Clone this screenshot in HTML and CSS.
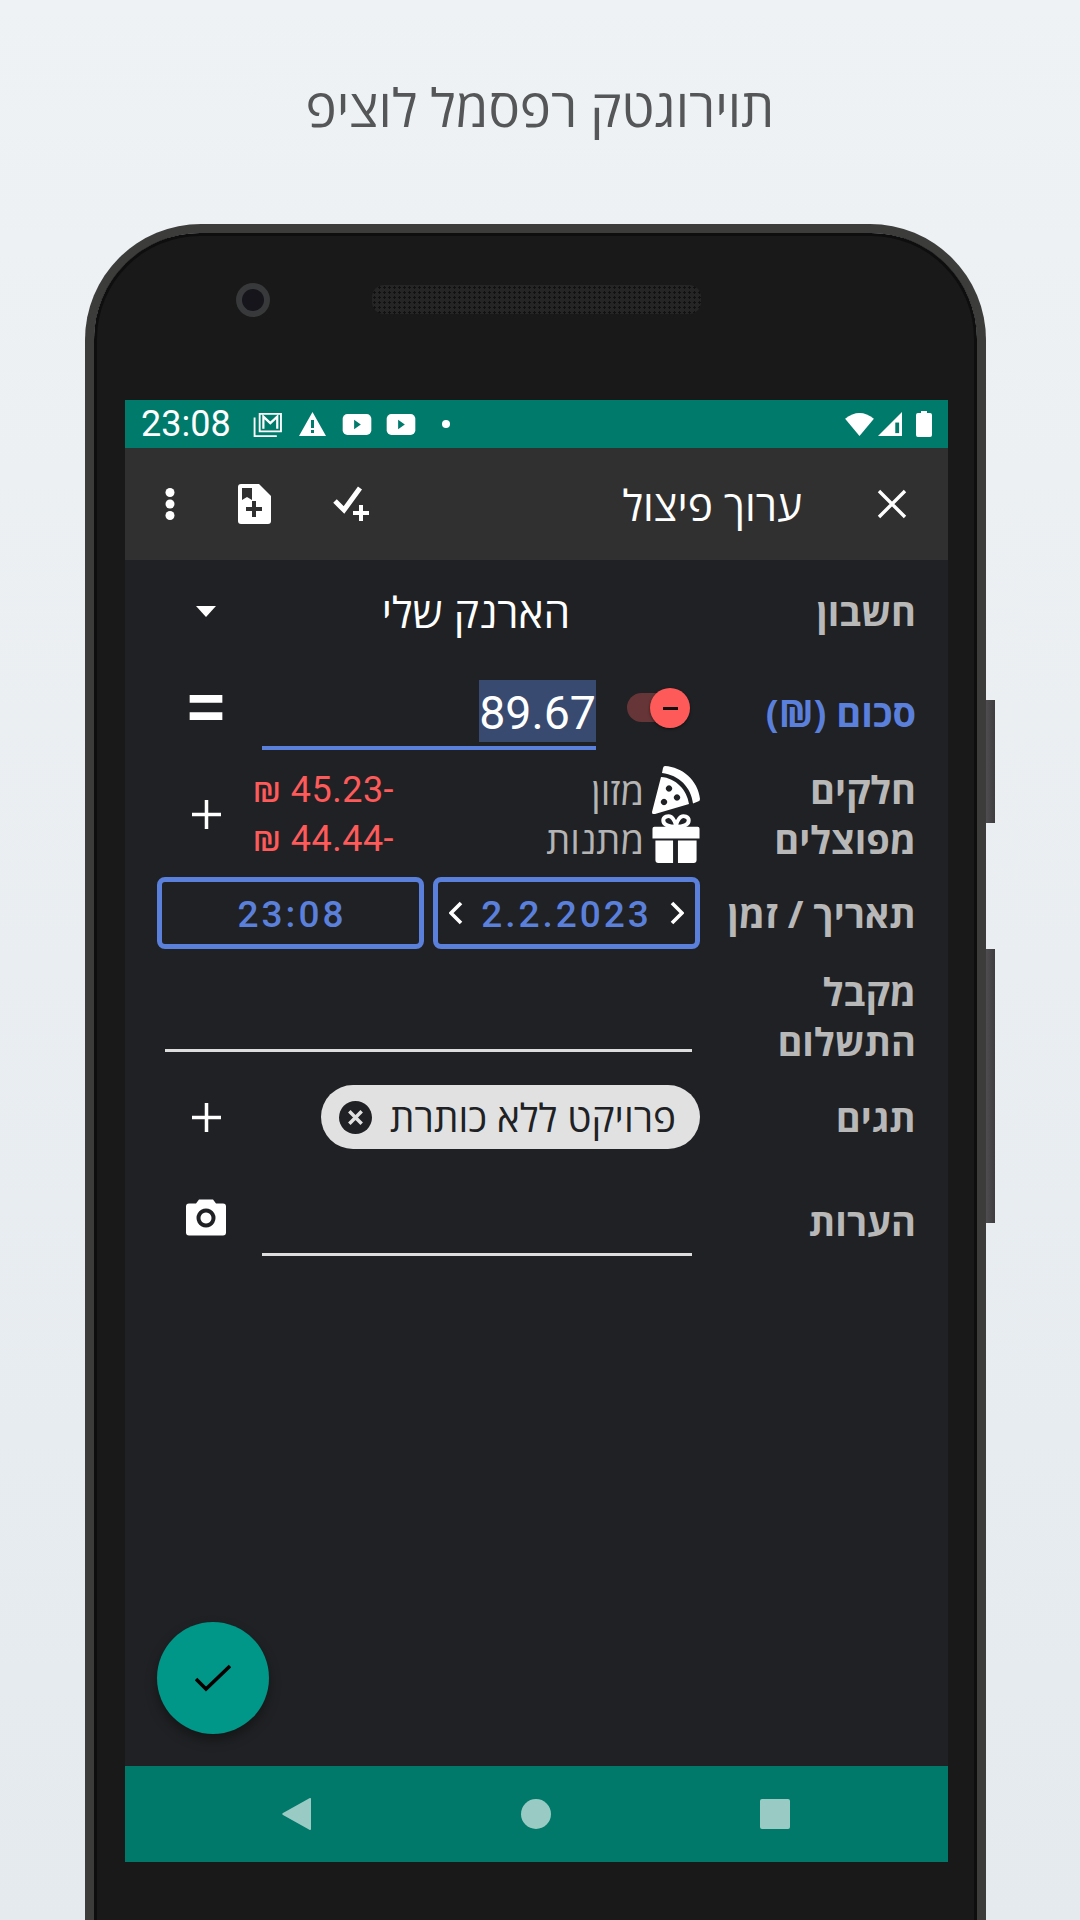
FILE: index.html
```html
<!DOCTYPE html>
<html lang="he">
<head>
    <meta charset="utf-8">
    <title>Split screen</title>
    <link rel="stylesheet" href="styles.css">
</head>
<body>
    <h1 class="headline">פיצול למספר קטגוריות</h1>

    <div class="phone">
        <div class="side-key side-key-top"></div>
        <div class="side-key side-key-bottom"></div>
        <div class="phone-face">
            <div class="earpiece-row">
                <div class="camera"><div class="lens"></div></div>
                <div class="speaker"></div>
            </div>

            <div class="screen">
                <!-- status bar -->
                <div class="status-bar">
                    <span class="clock">23:08</span>
                    <svg class="st-mail" width="30" height="25" viewBox="0 0 32 27">
                        <path d="M7 2h23v19H7z" fill="none" stroke="#fff" stroke-width="2"/>
                        <path d="M1.500 6v20h24" fill="none" stroke="#fff" stroke-width="2"/>
                        <path d="M11 18V5l7.500 7L26 5v13" fill="none" stroke="#fff" stroke-width="2.400"/>
                    </svg>
                    <svg class="st-warn" width="27" height="24" viewBox="0 0 27 24">
                        <path d="M13.500 0L27 24H0z" fill="#fff"/>
                        <path d="M12 8h3v8h-3zM12 18h3v3h-3z" fill="#007a6b"/>
                    </svg>
                    <svg class="st-video" width="30" height="21" viewBox="0 0 30 22">
                        <rect width="30" height="22" rx="5" fill="#fff"/>
                        <path d="M12 6l7 5-7 5z" fill="#007a6b"/>
                    </svg>
                    <svg class="st-video-last" width="30" height="21" viewBox="0 0 30 22">
                        <rect width="30" height="22" rx="5" fill="#fff"/>
                        <path d="M12 6l7 5-7 5z" fill="#007a6b"/>
                    </svg>
                    <span class="st-dot"></span>
                    <span class="status-spacer"></span>
                    <svg width="29" height="24" viewBox="0 0 30 25">
                        <path d="M15 25L0 7Q15 -5 30 7z" fill="#fff"/>
                    </svg>
                    <svg class="st-signal" width="26" height="24" viewBox="0 0 25 25">
                        <path d="M25 0v25H0z" fill="#fff"/>
                        <path d="M18 11h4v11h-4z" fill="#007a6b"/>
                    </svg>
                    <svg width="16" height="26" viewBox="0 0 16 26">
                        <path d="M5 0h6v2h3q2 0 2 2v20q0 2-2 2H2q-2 0-2-2V4q0-2 2-2h3z" fill="#fff"/>
                    </svg>
                </div>

                <!-- toolbar -->
                <div class="toolbar">
                    <svg class="close-icon" width="30" height="30" viewBox="0 0 30 30">
                        <path d="M2 2l26 26M28 2L2 28" stroke="#fff" stroke-width="3.400"/>
                    </svg>
                    <span class="toolbar-title">ערוך פיצול</span>
                    <span class="toolbar-spacer"></span>
                    <svg class="tb-check" width="38" height="36" viewBox="0 0 38 36">
                        <path d="M2 15l9 9L27 2" fill="none" stroke="#fff" stroke-width="5"/>
                        <path d="M28 19v16M20 27h16" stroke="#fff" stroke-width="4"/>
                    </svg>
                    <svg class="tb-doc" width="33" height="40" viewBox="0 0 33 40">
                        <path d="M3 0h18l12 12v25q0 3-3 3H3q-3 0-3-3V3q0-3 3-3z" fill="#fff"/>
                        <path d="M4 4h10v12l-5-3-5 3z" fill="#303030"/>
                        <path d="M16 17v16M8 25h16" stroke="#303030" stroke-width="4"/>
                    </svg>
                    <svg width="10" height="32" viewBox="0 0 10 32">
                        <circle cx="5" cy="4.500" r="4.500" fill="#fff"/>
                        <circle cx="5" cy="16" r="4.500" fill="#fff"/>
                        <circle cx="5" cy="27.500" r="4.500" fill="#fff"/>
                    </svg>
                </div>

                <!-- form -->
                <div class="form">
                    <div class="row row-account">
                        <div class="label">חשבון</div>
                        <div class="account-name">הארנק שלי</div>
                        <div class="side-action"><span class="caret"></span></div>
                    </div>

                    <div class="row row-amount">
                        <div class="label label-blue">סכום (₪)</div>
                        <div class="sign-switch">
                            <span class="switch-track"></span>
                            <span class="switch-thumb"><span class="switch-minus"></span></span>
                        </div>
                        <div class="amount-field"><span class="amount-value">89.67</span></div>
                        <div class="side-action side-action-equals">
                            <svg width="34" height="25" viewBox="0 0 34 26"><path d="M0 0h34v8H0zM0 18h34v8H0z" fill="#fff"/></svg>
                        </div>
                    </div>

                    <div class="row row-parts">
                        <div class="label">חלקים מפוצלים</div>
                        <div class="parts">
                            <div class="part">
                                <svg class="part-icon" width="48" height="48" viewBox="0 0 48 48">
                                    <path d="M13 0C30 1 46 14 48 33q0 2-2 2.500l-5 2C39 21 27 9 10 7l1-5q.5-2 2-2z" fill="#fff"/>
                                    <path fill-rule="evenodd" d="M9 11C24 12 35 24 37 38L3 48q-3 1-3-2z M17 19.300a3.200 3.200 0 1 0 .01 0z M25 28.300a3.200 3.200 0 1 0 .01 0z M12 32.800a3.200 3.200 0 1 0 .01 0z" fill="#fff"/>
                                </svg>
                                <span class="part-name">מזון</span>
                                <span class="part-sum">-45.23 ₪</span>
                            </div>
                            <div class="part">
                                <svg class="part-icon" width="48" height="49" viewBox="0 0 48 50">
                                    <path d="M2 13h44q2 0 2 2v10H0V15q0-2 2-2zM3 27h18v23H6q-3 0-3-3zM26 27h19v20q0 3-3 3H26z" fill="#fff"/>
                                    <path d="M24 13C14 13 11 10 11 6.500S16 1 19 3s5 7 5 10zm0 0c10 0 13-3 13-6.500S32 1 29 3s-5 7-5 10z" fill="none" stroke="#fff" stroke-width="4"/>
                                </svg>
                                <span class="part-name">מתנות</span>
                                <span class="part-sum">-44.44 ₪</span>
                            </div>
                        </div>
                        <div class="side-action">
                            <svg width="29" height="29" viewBox="0 0 28 28"><path d="M14 0v28M0 14h28" stroke="#fff" stroke-width="3.400"/></svg>
                        </div>
                    </div>

                    <div class="row row-date">
                        <div class="label">תאריך / זמן</div>
                        <div class="date-box date-box-date">
                            <svg width="15" height="24" viewBox="0 0 15 24"><path d="M12 2L2 12l10 10" fill="none" stroke="#fff" stroke-width="3.600"/></svg>
                            <span class="date-text">2.2.2023</span>
                            <svg width="15" height="24" viewBox="0 0 15 24"><path d="M3 2l10 10L3 22" fill="none" stroke="#fff" stroke-width="3.600"/></svg>
                        </div>
                        <div class="date-box date-box-time">
                            <span class="date-text">23:08</span>
                        </div>
                    </div>

                    <div class="row row-payee">
                        <div class="label">מקבל התשלום</div>
                        <div class="payee-field"></div>
                    </div>

                    <div class="row row-tags">
                        <div class="label">תגים</div>
                        <div class="tags">
                            <div class="chip">
                                <span class="chip-text">פרויקט ללא כותרת</span>
                                <svg width="33" height="33" viewBox="0 0 32 32">
                                    <circle cx="16" cy="16" r="16" fill="#202124"/>
                                    <path d="M10 10l12 12M22 10L10 22" stroke="#e1e1e1" stroke-width="3.400"/>
                                </svg>
                            </div>
                        </div>
                        <div class="side-action">
                            <svg width="29" height="29" viewBox="0 0 28 28"><path d="M14 0v28M0 14h28" stroke="#fff" stroke-width="3.400"/></svg>
                        </div>
                    </div>

                    <div class="row row-notes">
                        <div class="label">הערות</div>
                        <div class="notes-field"></div>
                        <div class="side-action side-action-camera">
                            <svg width="40" height="37" viewBox="0 0 40 36">
                                <path fill-rule="evenodd" d="M13 0h14l3 4h7q3 0 3 3v26q0 3-3 3H3q-3 0-3-3V7q0-3 3-3h7z M20 9a9.500 9.500 0 1 0 .01 0z M20 13a5.500 5.500 0 1 1-.01 0z" fill="#fff"/>
                            </svg>
                        </div>
                    </div>
                </div>

                <div class="fab">
                    <svg width="36" height="28" viewBox="0 0 36 28"><path d="M1 15l10 10L35 2" fill="none" stroke="#000" stroke-width="3.600"/></svg>
                </div>

                <!-- nav bar -->
                <div class="nav-bar">
                    <svg width="30" height="34" viewBox="0 0 30 34"><path d="M29 2v30a1 1 0 0 1-1.600.8L1 18a1.200 1.200 0 0 1 0-2L27.400 1.200A1 1 0 0 1 29 2z" fill="#99cbc4"/></svg>
                    <span class="nav-home"></span>
                    <span class="nav-recents"></span>
                </div>
            </div>
        </div>
    </div>
</body>
</html>
```

FILE: styles.css
```css
* {
    box-sizing: border-box;
}

html, body {
    height: 1920px;
    overflow: hidden;
}

body {
    margin: 0;
    background: linear-gradient(#eef2f5, #e5eaee);
    font-family: Roboto, "Open Sans", sans-serif;
}

.headline {
    margin: 0;
    height: 224px;
    padding-top: 76px;
    text-align: center;
    font-size: 52.5px;
    line-height: 66px;
    font-weight: 400;
    color: #555658;
    direction: ltr;
    unicode-bidi: bidi-override;
}

.phone {
    position: relative;
    width: 901px;
    height: 1696px;
    margin-left: 85px;
    border: 9px solid #3c3c3a;
    border-bottom: 0;
    border-radius: 116px 116px 0 0;
}

.side-key {
    position: absolute;
    right: -18px;
    width: 9px;
    background: linear-gradient(90deg, #4f4d50, #3e3c3e);
}

.side-key-top {
    top: 467px;
    height: 123px;
}

.side-key-bottom {
    top: 716px;
    height: 274px;
}

.phone-face {
    height: 100%;
    padding: 0 26px 0 28px;
    background: #191919;
    border: 3px solid #0e0e0e;
    border-bottom: 0;
    border-radius: 106px 106px 0 0;
}

.earpiece-row {
    height: 164px;
    display: flex;
    align-items: flex-start;
    padding: 47px 0 0 111px;
}

.camera {
    width: 34px;
    height: 34px;
    border-radius: 50%;
    background: #38393a;
    display: flex;
    align-items: center;
    justify-content: center;
}

.lens {
    width: 22px;
    height: 22px;
    border-radius: 50%;
    background: #15151b;
}

.speaker {
    width: 329px;
    height: 29px;
    margin: 2px 0 0 102px;
    border-radius: 12px;
    background-color: #252525;
    background-image: radial-gradient(#111 1.2px, transparent 1.4px);
    background-size: 5px 5px;
}

.screen {
    position: relative;
    width: 823px;
    height: 1462px;
    background: #202124;
    display: flex;
    flex-direction: column;
}

.status-bar {
    height: 48px;
    flex: none;
    display: flex;
    align-items: center;
    padding: 0 16px;
    background: #007a6b;
    color: #fff;
}

.clock {
    font-size: 36px;
    margin-right: 22px;
}

.st-mail, .st-warn {
    margin-right: 16px;
}

.st-video {
    margin-right: 14px;
}

.st-video-last {
    margin-right: 26px;
}

.st-dot {
    width: 8px;
    height: 8px;
    border-radius: 50%;
    background: #fff;
}

.status-spacer {
    flex: 1;
}

.st-signal {
    margin: 0 13px 0 3px;
}

.toolbar {
    height: 112px;
    flex: none;
    display: flex;
    align-items: center;
    direction: rtl;
    padding: 0 41px 0 40px;
    background: #303030;
    color: #fff;
}

.close-icon {
    margin-left: 75px;
}

.toolbar-title {
    font-size: 42.5px;
    font-family: "Open Sans", sans-serif;
}

.toolbar-spacer {
    flex: 1;
}

.tb-check {
    margin-left: 62px;
}

.tb-doc {
    margin-left: 63px;
}

.form {
    flex: 1;
    direction: rtl;
    padding: 0 32px;
}

.row {
    display: flex;
    align-items: center;
}

.label {
    width: 216px;
    flex: none;
    padding-left: 10px;
    font-family: "Open Sans", sans-serif;
    font-size: 38px;
    line-height: 50px;
    font-weight: 700;
    color: #b8b8b8;
}

.label-blue {
    color: #5a80dc;
}

.side-action {
    width: 98px;
    flex: none;
    display: flex;
    justify-content: center;
}

.row-account {
    height: 102px;
}

.account-name {
    flex: 1;
    text-align: center;
    font-family: "Open Sans", sans-serif;
    font-size: 42.5px;
    color: #fff;
    padding-right: 3px;
}

.caret {
    width: 0;
    height: 0;
    border-style: solid;
    border-width: 11px 10px 0;
    border-color: #fff transparent transparent;
}

.row-amount {
    height: 100px;
}

.sign-switch {
    position: relative;
    width: 63px;
    height: 40px;
    margin: 26px 10px 0 31px;
    align-self: flex-start;
    flex: none;
}

.switch-track {
    position: absolute;
    top: 5px;
    left: 0;
    width: 50px;
    height: 29px;
    border-radius: 15px;
    background: #663537;
}

.switch-thumb {
    position: absolute;
    top: 0;
    right: 0;
    width: 40px;
    height: 40px;
    border-radius: 50%;
    background: #ff5a5a;
    box-shadow: 0 1px 3px rgba(0, 0, 0, 0.5);
    display: flex;
    align-items: center;
    justify-content: center;
}

.switch-minus {
    width: 15px;
    height: 3px;
    background: #111;
}

.amount-field {
    width: 334px;
    height: 70px;
    margin: 18px 0 0 7px;
    align-self: flex-start;
    flex: none;
    border-bottom: 4px solid #5a80dc;
    direction: ltr;
    display: flex;
    justify-content: flex-end;
}

.amount-value {
    height: 62px;
    background: #394a70;
    font-size: 46.5px;
    line-height: 66px;
    color: #fff;
}

.side-action-equals {
    margin-bottom: 10px;
}

.row-parts {
    height: 100px;
    margin-top: 2px;
}

.parts {
    flex: 1;
}

.part {
    height: 49px;
    display: flex;
    align-items: center;
}

.part-icon {
    flex: none;
}

.part-name {
    flex: 1;
    margin-right: 8px;
    font-family: "Open Sans", sans-serif;
    font-size: 38px;
    color: #b4b4b4;
}

.part-sum {
    margin-left: -2px;
    font-size: 36px;
    color: #ff5a5a;
    letter-spacing: 0.5px;
}

.row-date {
    height: 72px;
    margin-top: 13px;
}

.date-box {
    height: 72px;
    display: flex;
    align-items: center;
    justify-content: center;
    border: 5px solid #5a80dc;
    border-radius: 8px;
    direction: ltr;
}

.date-box-date {
    width: 267px;
    justify-content: space-between;
    padding: 0 11px;
}

.date-box-time {
    width: 267px;
    margin-right: 9px;
    padding-left: 3px;
}

.date-text {
    padding-top: 3px;
    font-size: 37px;
    font-weight: 500;
    letter-spacing: 3px;
    color: #5a80dc;
}

.row-payee {
    margin-top: 17px;
    align-items: flex-start;
}

.payee-field {
    flex: 1;
    height: 86px;
    margin: 0 8px;
    border-bottom: 3px solid #ddd;
}

.row-tags {
    height: 96px;
    margin-top: 3px;
}

.tags {
    flex: 1;
}

.chip {
    display: inline-flex;
    align-items: center;
    height: 64px;
    padding: 0 24px 0 18px;
    gap: 18px;
    border-radius: 32px;
    background: #e1e1e1;
}

.chip-text {
    font-family: "Open Sans", sans-serif;
    font-size: 38.7px;
    color: #202124;
}

.row-notes {
    height: 100px;
    margin-top: 6px;
}

.notes-field {
    flex: 1;
    height: 85px;
    margin-right: 8px;
    margin-left: 7px;
    border-bottom: 3px solid #ddd;
    align-self: flex-start;
}

.side-action-camera {
    margin-bottom: 8px;
}

.fab {
    position: absolute;
    left: 32px;
    bottom: 128px;
    width: 112px;
    height: 112px;
    border-radius: 50%;
    background: #009688;
    box-shadow: 0 6px 12px rgba(0, 0, 0, 0.35);
    display: flex;
    align-items: center;
    justify-content: center;
}

.nav-bar {
    height: 96px;
    flex: none;
    display: flex;
    align-items: center;
    justify-content: space-between;
    padding: 0 158px 0 157px;
    background: #00786a;
}

.nav-home {
    width: 30px;
    height: 30px;
    border-radius: 50%;
    background: #99cbc4;
}

.nav-recents {
    width: 30px;
    height: 30px;
    border-radius: 2px;
    background: #99cbc4;
}
```
